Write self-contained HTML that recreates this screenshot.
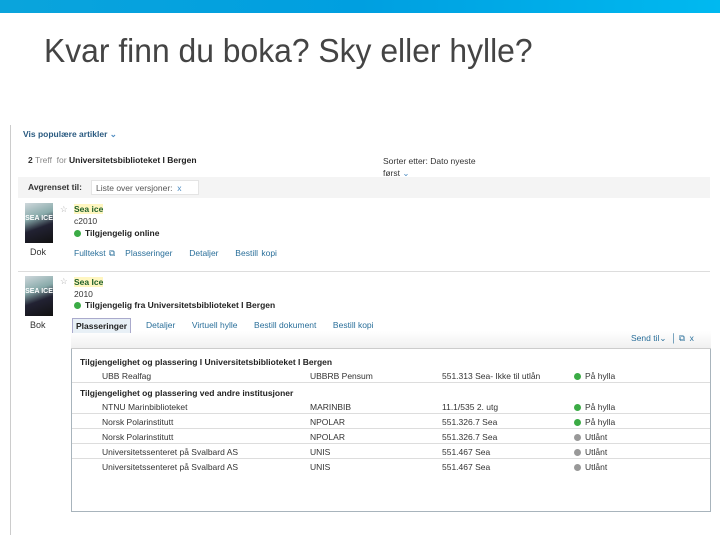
<!DOCTYPE html>
<html><head><meta charset="utf-8"><style>
*{margin:0;padding:0;box-sizing:border-box}
body{width:720px;height:540px;background:#fff;position:relative;overflow:hidden;font-family:"Liberation Sans",Arial,sans-serif;font-size:8.5px;color:#333}
.a{position:absolute;white-space:nowrap}
.bar{left:0;top:0;width:720px;height:13px;background:linear-gradient(90deg,#0aa4dc,#009fe0 50%,#00b9f0)}
.title{left:44px;top:32px;font-size:33px;color:#444;transform:scaleX(.965);transform-origin:left}
.lk{color:#2a6f9a}
.b{font-weight:bold;color:#222}
.dot{display:inline-block;width:7px;height:7px;border-radius:50%;background:#3bab45;margin-right:4px;vertical-align:-1px}
.g{background:#999}
.cover{width:28px;height:40px;background:linear-gradient(160deg,#cfd8dc 0,#8aa 35%,#223 60%,#111 100%);color:#fff;font-size:7px;font-weight:bold;padding-top:12px;text-align:center}
.hl{background:#fff6c0;color:#1d5f2a;font-weight:bold}
.row{left:72px;width:638px;height:15px;border-bottom:1px solid #ddd}
</style></head><body>
<div class="a bar"></div>
<div class="a title">Kvar finn du boka? Sky eller hylle?</div>
<div class="a" style="left:10px;top:125px;width:1px;height:410px;background:#ccc"></div>

<div class="a lk b" style="left:23px;top:129px;color:#2a5a80">Vis populære artikler <span style="color:#4a8ac0">⌄</span></div>
<div class="a" style="left:28px;top:155px"><b>2</b> <span style="color:#888">Treff &nbsp;for</span> <b style="color:#222">Universitetsbiblioteket I Bergen</b></div>
<div class="a" style="left:383px;top:155px;line-height:12px">Sorter etter: Dato nyeste<br>først <span style="color:#4a8ac0">⌄</span></div>
<div class="a" style="left:18px;top:177px;width:692px;height:21px;background:#f4f4f4"></div>
<div class="a b" style="left:28px;top:182px;color:#333">Avgrenset til:</div>
<div class="a" style="left:91px;top:180px;width:108px;height:15px;background:#fff;border:1px solid #e4e4e4;padding:2px 4px;color:#555">Liste over versjoner: <span style="color:#4a8ac0">&nbsp;x</span></div>

<div class="a cover" style="left:25px;top:203px">SEA ICE</div>
<div class="a" style="left:30px;top:247px;font-size:9px">Dok</div>
<div class="a" style="left:60px;top:204px;color:#aaa">☆</div>
<div class="a hl" style="left:74px;top:204px">Sea ice</div>
<div class="a" style="left:74px;top:216px">c2010</div>
<div class="a b" style="left:74px;top:228px"><span class="dot"></span>Tilgjengelig online</div>
<div class="a lk" style="left:74px;top:248px;word-spacing:1px">Fulltekst ⧉ &nbsp; Plasseringer &nbsp;&nbsp;&nbsp; Detaljer &nbsp;&nbsp;&nbsp; Bestill kopi</div>
<div class="a" style="left:18px;top:271px;width:692px;height:1px;background:#ddd"></div>

<div class="a cover" style="left:25px;top:276px">SEA ICE</div>
<div class="a" style="left:30px;top:320px;font-size:9px">Bok</div>
<div class="a" style="left:60px;top:276px;color:#aaa">☆</div>
<div class="a hl" style="left:74px;top:277px">Sea Ice</div>
<div class="a" style="left:74px;top:289px">2010</div>
<div class="a b" style="left:74px;top:300px"><span class="dot"></span>Tilgjengelig fra Universitetsbiblioteket I Bergen</div>

<div class="a" style="left:71px;top:331px;width:640px;height:181px;border:1px solid #a8b4bc;border-top:none"></div>
<div class="a" style="left:71px;top:331px;width:640px;height:18px;background:linear-gradient(#fff,#f0f0f0);border-bottom:1px solid #ccc"></div>
<div class="a b" style="left:72px;top:318px;padding:2px 3px;background:#e8f0f6;border:1px solid #aac;border-bottom:none;color:#222">Plasseringer</div>
<div class="a lk" style="left:146px;top:320px">Detaljer &nbsp;&nbsp;&nbsp;&nbsp;&nbsp; Virtuell hylle &nbsp;&nbsp;&nbsp;&nbsp;&nbsp; Bestill dokument &nbsp;&nbsp;&nbsp;&nbsp;&nbsp; Bestill kopi</div>
<div class="a" style="left:631px;top:333px;color:#2a6f9a">Send til⌄ &nbsp;│ ⧉ &nbsp;x</div>

<div class="a b" style="left:80px;top:357px">Tilgjengelighet og plassering I Universitetsbiblioteket I Bergen</div>
<div class="a row" style="top:368px"></div>
<div class="a" style="left:102px;top:371px">UBB Realfag</div><div class="a" style="left:310px;top:371px">UBBRB Pensum</div><div class="a" style="left:442px;top:371px">551.313 Sea- Ikke til utlån</div><div class="a" style="left:574px;top:371px"><span class="dot"></span>På hylla</div>
<div class="a b" style="left:80px;top:388px">Tilgjengelighet og plassering ved andre institusjoner</div>
<div class="a row" style="top:399px"></div>
<div class="a" style="left:102px;top:402px">NTNU Marinbiblioteket</div><div class="a" style="left:310px;top:402px">MARINBIB</div><div class="a" style="left:442px;top:402px">11.1/535 2. utg</div><div class="a" style="left:574px;top:402px"><span class="dot"></span>På hylla</div>
<div class="a" style="left:102px;top:417px">Norsk Polarinstitutt</div><div class="a" style="left:310px;top:417px">NPOLAR</div><div class="a" style="left:442px;top:417px">551.326.7 Sea</div><div class="a" style="left:574px;top:417px"><span class="dot"></span>På hylla</div>
<div class="a row" style="top:428px;height:1px"></div>
<div class="a" style="left:102px;top:432px">Norsk Polarinstitutt</div><div class="a" style="left:310px;top:432px">NPOLAR</div><div class="a" style="left:442px;top:432px">551.326.7 Sea</div><div class="a" style="left:574px;top:432px"><span class="dot g"></span>Utlånt</div>
<div class="a row" style="top:443px;height:1px"></div>
<div class="a" style="left:102px;top:447px">Universitetssenteret på Svalbard AS</div><div class="a" style="left:310px;top:447px">UNIS</div><div class="a" style="left:442px;top:447px">551.467 Sea</div><div class="a" style="left:574px;top:447px"><span class="dot g"></span>Utlånt</div>
<div class="a row" style="top:458px;height:1px"></div>
<div class="a" style="left:102px;top:462px">Universitetssenteret på Svalbard AS</div><div class="a" style="left:310px;top:462px">UNIS</div><div class="a" style="left:442px;top:462px">551.467 Sea</div><div class="a" style="left:574px;top:462px"><span class="dot g"></span>Utlånt</div>
</body></html>
